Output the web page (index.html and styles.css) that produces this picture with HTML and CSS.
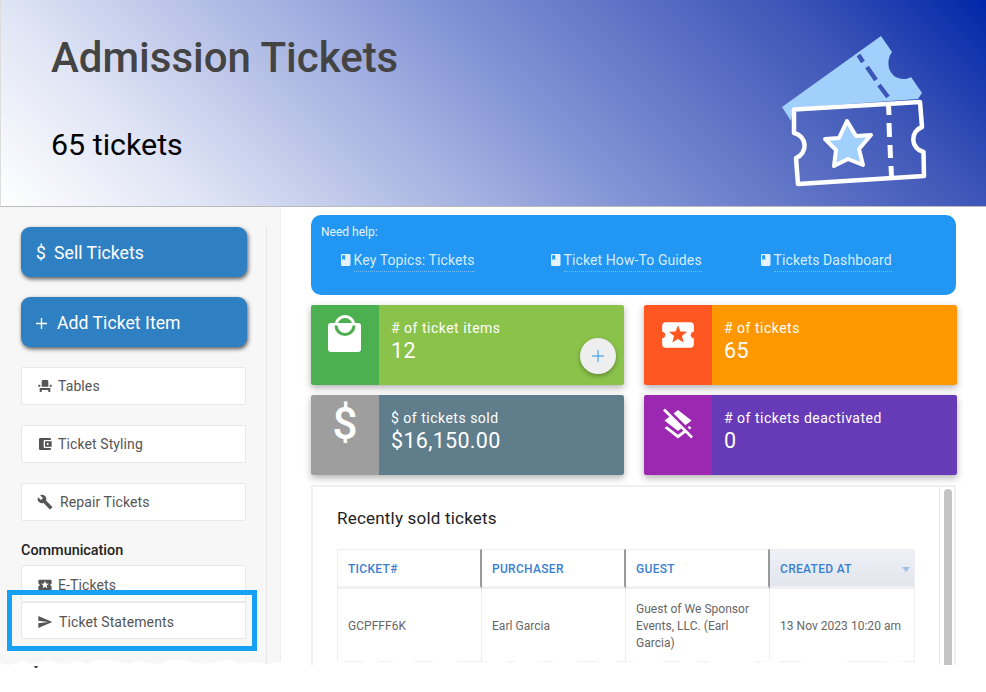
FILE: index.html
```html
<!DOCTYPE html>
<html lang="en">
<head>
<meta charset="utf-8">
<title>Admission Tickets</title>
<link rel="stylesheet" href="styles.css">
</head>
<body>
<div class="page">
  <header class="hero">
    <div class="hero-text">
      <h1 class="hero-title">Admission Tickets</h1>
      <p class="hero-count">65 tickets</p>
    </div>
    <svg class="hero-art" width="150" height="160" viewBox="780 30 150 160" aria-hidden="true">
      <path class="art-back" d="M782 107 L881 36 L892 52 C885 62 889 75 898 78 C903 80 908 79 911 77 L922 93 L918 99 L793 108 L791 121 Z"/>
      <path class="art-cut" d="M858.5 55 L863 62 M867 67 L876 80 M879 85 L888 97"/>
      <path class="art-front" d="M794 109.5 L920 102 L922 127 A13 13 0 0 0 923.5 152 L924 176 L798 184 L796 158 A13 13 0 0 0 794 133 Z"/>
      <path class="art-perf" d="M888.5 105 L889 115 M889 123 L889.5 137 M890 145 L890.5 158 M891 166 L891.5 177"/>
      <path class="art-star" d="M847 121 L856 136 L871 135 L859 149 L863 165 L848 159 L834 166 L836 150 L825 139 L839 138 Z"/>
    </svg>
  </header>
  <div class="body">
    <aside class="side">
      <div class="side-inner">
        <a class="cta"><span class="cta-glyph">$</span>Sell Tickets</a>
        <a class="cta"><svg class="cta-plus" width="11" height="11" viewBox="0 0 11 11"><path d="M5.5 0V11M0 5.5H11"/></svg>Add Ticket Item</a>
        <a class="item"><svg class="item-ico" viewBox="0 0 24 24"><path d="M4 18v3h3v-3h10v3h3v-6H4zm15-8h3v3h-3zM2 10h3v3H2zm15 3H7V5c0-1.1.9-2 2-2h6c1.1 0 2 .9 2 2v8z"/></svg>Tables</a>
        <a class="item"><svg class="item-ico" viewBox="0 0 24 24"><path d="M21 18v1c0 1.1-.9 2-2 2H5c-1.11 0-2-.9-2-2V5c0-1.1.89-2 2-2h14c1.1 0 2 .9 2 2v1h-9c-1.11 0-2 .9-2 2v8c0 1.1.89 2 2 2h9zm-9-2h10V8H12v8zm4-2.5c-.83 0-1.5-.67-1.5-1.5s.67-1.5 1.5-1.5 1.5.67 1.5 1.5-.67 1.5-1.5 1.5z"/></svg>Ticket Styling</a>
        <a class="item item-wide"><svg class="item-ico" viewBox="0 0 24 24"><path d="M22.7 19l-9.1-9.1c.9-2.3.4-5-1.5-6.9-2-2-5-2.4-7.4-1.3L9 6 6 9 1.6 4.7C.4 7.1.9 10.1 2.9 12.1c1.9 1.9 4.6 2.4 6.9 1.5l9.1 9.1c.4.4 1 .4 1.4 0l2.3-2.3c.5-.4.5-1.1.1-1.4z"/></svg>Repair Tickets</a>
        <h3 class="side-heading">Communication</h3>
        <div class="item-group">
          <a class="item"><svg class="item-ico" viewBox="0 0 24 24"><path d="M20 12c0-1.1.9-2 2-2V6c0-1.1-.9-2-2-2H4c-1.1 0-1.99.9-1.99 2v4c1.1 0 1.99.9 1.99 2s-.89 2-2 2v4c0 1.1.9 2 2 2h16c1.1 0 2-.9 2-2v-4c-1.1 0-2-.9-2-2zm-4.42 4.8L12 14.5l-3.58 2.3 1.08-4.12-3.29-2.69 4.24-.25L12 5.8l1.54 3.95 4.24.25-3.29 2.69 1.09 4.11z"/></svg>E-Tickets</a>
          <a class="item item-wide"><svg class="item-ico" viewBox="0 0 24 24"><path d="M2.01 21L23 12 2.01 3 2 10l15 2-15 2z"/></svg>Ticket Statements</a>
        </div>
      </div>
    </aside>
    <main class="main">
      <section class="help">
        <div class="help-title">Need help:</div>
        <div class="help-links">
          <div class="help-cell"><svg class="book" viewBox="4 2 16 20"><path d="M18 2H6c-1.1 0-2 .9-2 2v16c0 1.1.9 2 2 2h12c1.1 0 2-.9 2-2V4c0-1.1-.9-2-2-2zM6 4h5v8l-2.5-1.5L6 12V4z"/></svg><a class="help-link">Key Topics: Tickets</a></div>
          <div class="help-cell"><svg class="book" viewBox="4 2 16 20"><path d="M18 2H6c-1.1 0-2 .9-2 2v16c0 1.1.9 2 2 2h12c1.1 0 2-.9 2-2V4c0-1.1-.9-2-2-2zM6 4h5v8l-2.5-1.5L6 12V4z"/></svg><a class="help-link">Ticket How-To Guides</a></div>
          <div class="help-cell"><svg class="book" viewBox="4 2 16 20"><path d="M18 2H6c-1.1 0-2 .9-2 2v16c0 1.1.9 2 2 2h12c1.1 0 2-.9 2-2V4c0-1.1-.9-2-2-2zM6 4h5v8l-2.5-1.5L6 12V4z"/></svg><a class="help-link">Tickets Dashboard</a></div>
        </div>
      </section>
      <section class="cards">
        <div class="card card-green">
          <div class="card-icon">
            <svg class="bag" width="36" height="40" viewBox="0 0 36 40">
              <circle class="bag-ring" cx="18" cy="11.5" r="9"/>
              <rect class="bag-body" x="1" y="9" width="33" height="29" rx="3"/>
              <path class="bag-arc" d="M9 11.5 A9 9 0 0 0 27 11.5"/>
            </svg>
          </div>
          <div class="card-body">
            <div class="card-label"># of ticket items</div>
            <div class="card-value">12</div>
            <a class="fab"><svg width="12" height="12" viewBox="0 0 12 12"><path d="M6 0V12M0 6H12"/></svg></a>
          </div>
        </div>
        <div class="card card-orange">
          <div class="card-icon">
            <svg class="card-svg" viewBox="0 0 24 24"><path d="M20 12c0-1.1.9-2 2-2V6c0-1.1-.9-2-2-2H4c-1.1 0-1.99.9-1.99 2v4c1.1 0 1.99.9 1.99 2s-.89 2-2 2v4c0 1.1.9 2 2 2h16c1.1 0 2-.9 2-2v-4c-1.1 0-2-.9-2-2zm-4.42 4.8L12 14.5l-3.58 2.3 1.08-4.12-3.29-2.69 4.24-.25L12 5.8l1.54 3.95 4.24.25-3.29 2.69 1.09 4.11z"/></svg>
          </div>
          <div class="card-body">
            <div class="card-label"># of tickets</div>
            <div class="card-value">65</div>
          </div>
        </div>
        <div class="card card-slate">
          <div class="card-icon"><span class="dollar">$</span></div>
          <div class="card-body">
            <div class="card-label">$ of tickets sold</div>
            <div class="card-value">$16,150.00</div>
          </div>
        </div>
        <div class="card card-purple">
          <div class="card-icon">
            <svg class="card-svg" viewBox="0 0 24 24"><path d="M19.81 14.99l1.19-.92-1.43-1.43-1.19.92 1.43 1.43zm-.45-4.72L21 9l-9-7-2.91 2.27 7.87 7.88 2.4-1.88zM3.27 1L2 2.27l4.22 4.22L3 9l1.63 1.27L12 16l2.1-1.63 1.43 1.43L12 18.54l-7.37-5.73L3 14.07l9 7 4.95-3.85L20.73 21 22 19.73 3.27 1z"/></svg>
          </div>
          <div class="card-body">
            <div class="card-label"># of tickets deactivated</div>
            <div class="card-value">0</div>
          </div>
        </div>
      </section>
      <section class="panel">
        <div class="panel-content">
          <h2 class="panel-title">Recently sold tickets</h2>
          <table class="grid">
            <thead>
              <tr>
                <th>TICKET#</th>
                <th>PURCHASER</th>
                <th>GUEST</th>
                <th class="sorted">CREATED AT<span class="caret"></span></th>
              </tr>
            </thead>
            <tbody>
              <tr>
                <td>GCPFFF6K</td>
                <td>Earl Garcia</td>
                <td>Guest of We Sponsor Events, LLC. (Earl Garcia)</td>
                <td>13 Nov 2023 10:20 am</td>
              </tr>
            </tbody>
          </table>
        </div>
        <div class="scroll"><div class="scroll-thumb"></div></div>
      </section>
    </main>
  </div>
  <div class="highlight"></div>
  <svg class="tear" width="986" height="34" viewBox="0 658 986 34" aria-hidden="true">
    <path class="tear-fill" d="M0 663 L8 665 L15 664 L22 661 L30 664 L40 663 L48 660 L56 663 L66 664 L78 661 L88 664 L96 660 L106 659 L118 662 L128 664 L138 661 L146 663 L160 664 L172 659 L182 660 L194 663 L206 664 L218 662 L230 660 L240 664 L252 662 L266 664 L280 662 L296 664 L304 665 L314 665 L322 662 L344 661 L352 663 L372 660 L382 662 L398 661 L412 661 L420 663 L446 660 L462 662 L476 663 L494 660 L512 662 L526 660 L548 662 L566 660 L590 663 L604 660 L622 662 L640 661 L656 660 L672 663 L684 660 L704 662 L722 660 L744 660 L760 662 L772 660 L788 663 L812 660 L842 661 L866 663 L890 661 L914 662 L926 665 L986 665 L986 692 L0 692 Z"/>
    <path class="tear-fleck" d="M34 666 L38 666 L37 668 L35 668 Z"/>
  </svg>
</div>
</body>
</html>
```
FILE: styles.css
```css
* { box-sizing: border-box; }
html, body { margin: 0; padding: 0; background: #fff; }
body { font-family: Roboto, "Liberation Sans", sans-serif; color: #444; }

.page { position: relative; width: 986px; height: 692px; overflow: hidden; }

/* Header */
.hero {
  height: 207px;
  display: flex;
  justify-content: space-between;
  align-items: flex-start;
  padding: 33px 56px 0 50px;
  border-left: 1px solid #ddd;
  border-bottom: 1px solid #bbb;
  background: linear-gradient(45deg, #fff 0%, #e0e5f5 17%, #8596d6 52%, #3d55b7 83%, #0026a8 100%);
}
.hero-title { margin: 0; font-size: 42px; line-height: 49px; font-weight: 500; color: #444; }
.hero-count { margin: 45px 0 0; font-size: 30.4px; line-height: 36px; color: #000; }
.hero-art { display: block; margin-top: -3px; }
.art-back { fill: #a1d0fc; }
.art-cut { fill: none; stroke: #3c56b8; stroke-width: 4.5; }
.art-front { fill: none; stroke: #fff; stroke-width: 4.5; stroke-linejoin: round; }
.art-perf { fill: none; stroke: #fff; stroke-width: 5; }
.art-star { fill: #a1d0fc; stroke: #fff; stroke-width: 4; stroke-linejoin: round; }

/* Layout */
.body { display: flex; height: 459px; overflow: hidden; }

/* Sidebar */
.side {
  flex: 0 0 281px;
  min-width: 0;
  padding: 20px 13px 0 1px;
  background: #f7f7f7;
  border-right: 1px solid #eee;
}
.side-inner {
  height: 100%;
  padding-left: 20px;
  padding-right: 19px;
  border-right: 1px solid #e6e6e6;
}
.cta {
  display: flex;
  align-items: center;
  width: 226px;
  height: 50px;
  margin-bottom: 20px;
  padding: 2px 0 0 15px;
  border-radius: 9px;
  background: #2f80c2;
  color: #fff;
  font-size: 17.6px;
  letter-spacing: .05px;
  box-shadow: 1px 2px 4px rgba(0,0,0,.65);
}
.cta-glyph { width: 18px; font-size: 17.6px; }
.cta-plus { margin-right: 10px; }
.cta-plus path { fill: none; stroke: #fff; stroke-width: 1.4; }
.item {
  display: flex;
  align-items: center;
  width: 225px;
  height: 38px;
  margin-bottom: 20px;
  padding-left: 15px;
  background: #fff;
  border: 1px solid #e8e8e8;
  border-radius: 2px;
  color: #555;
  font-size: 14px;
  letter-spacing: .1px;
}
.item-ico { width: 16px; height: 16px; margin-right: 5px; fill: #555; flex: none; }
.item-wide .item-ico { margin-right: 7px; }
.side-heading { margin: 21px 0 6px; font-size: 14.4px; line-height: 17px; font-weight: 500; color: #222; }
.item-group .item { margin-bottom: 0; height: 37px; padding-top: 2px; }
.item-group .item-wide .item-ico { margin-right: 6px; }

/* Main */
.main { flex: 1; min-width: 0; padding: 8px 30px 0; }

.help {
  height: 80px;
  padding: 10px 10px 0;
  background: #2196f3;
  border-radius: 10px;
}
.help-title { font-size: 12px; line-height: 15px; color: #eaf5fe; }
.help-links { display: grid; grid-template-columns: repeat(3, 210px); margin-top: 12px; padding-left: 20px; }
.help-cell { display: flex; align-items: flex-start; height: 22px; }
.book { width: 9.5px; height: 12px; margin: 2px 3px 0 0; fill: #e3f2fd; flex: none; }
.help-link {
  display: block;
  padding-bottom: 3px;
  font-size: 14px;
  line-height: 16px;
  letter-spacing: .1px;
  color: #d6ecfd;
  border-bottom: 1px dotted #74bcf6;
}

/* Cards */
.cards { display: grid; grid-template-columns: 313px 313px; gap: 10px 20px; margin-top: 10px; }
.card { display: flex; height: 80px; border-radius: 2px; overflow: hidden; box-shadow: 0 3px 7px rgba(0,0,0,.3); color: #fff; }
.card-icon { flex: 0 0 68px; display: flex; justify-content: center; align-items: flex-start; }
.card-body { position: relative; flex: 1; padding: 14px 12px 0; }
.card-label { font-size: 14px; line-height: 19px; letter-spacing: .5px; }
.card-value { font-size: 21.5px; line-height: 26px; letter-spacing: .3px; }
.card-green .card-icon { background: #4caf50; }
.card-green .card-body { background: #8bc34a; }
.card-orange .card-icon { background: #ff5722; }
.card-orange .card-body { background: #ff9800; }
.card-slate .card-icon { background: #9e9e9e; }
.card-slate .card-body { background: #607d8b; }
.card-purple .card-icon { background: #9c27b0; }
.card-purple .card-body { background: #673ab7; }
.card-svg { width: 36px; height: 36px; margin-top: 12px; fill: #fff; }
.card-orange .card-svg { width: 38px; height: 38px; margin-top: 11px; }
.bag { margin-top: 9px; }
.bag-ring { fill: none; stroke: #fff; stroke-width: 3; }
.bag-body { fill: #fff; }
.bag-arc { fill: none; stroke: #4caf50; stroke-width: 3; }
.dollar { font-size: 44px; line-height: 52px; font-weight: 500; margin-top: 3px; }
.fab {
  position: absolute;
  right: 8px;
  top: 33px;
  display: flex;
  justify-content: center;
  align-items: center;
  width: 36px;
  height: 36px;
  border-radius: 50%;
  background: #eee;
  box-shadow: 0 2px 5px rgba(0,0,0,.3);
}
.fab path { fill: none; stroke: #2196f3; stroke-width: 1; }

/* Panel */
.panel {
  display: flex;
  width: 645px;
  height: 190px;
  margin-top: 10px;
  border: 2px solid #f0f0f0;
  border-bottom: 0;
}
.panel-content { flex: 1; min-width: 0; padding: 0 25px 0 24px; border-right: 1px solid #e8e8e8; }
.panel-title { margin: 18px 0; font-size: 17px; line-height: 26px; font-weight: 400; color: #222; letter-spacing: .2px; }
.scroll { flex: 0 0 14px; padding: 2px 2px 0 4px; }
.scroll-thumb { width: 8px; height: 200px; border-radius: 4px 4px 0 0; background: #c4c4c4; }

.grid { width: 578px; border-collapse: separate; border-spacing: 0; table-layout: fixed; }
.grid th {
  width: 144px;
  height: 40px;
  padding: 2px 0 0 10px;
  text-align: left;
  font-size: 12px;
  font-weight: 500;
  color: #3a80d2;
  letter-spacing: .3px;
  border-top: 1px solid #eee;
  border-right: 2px solid #999;
  border-bottom: 3px solid #f0f0f0;
  background: #fff;
}
.grid th:first-child { width: 145px; border-left: 1px solid #eee; }
.grid th:last-child { width: 145px; border-right: 1px solid #eee; }
.grid th.sorted { position: relative; background: linear-gradient(#eff1f7, #e1e5ed); }
.caret {
  position: absolute;
  right: 4px;
  top: 17px;
  width: 0;
  height: 0;
  border-left: 4px solid transparent;
  border-right: 4px solid transparent;
  border-top: 5px solid #9dbfe8;
}
.grid td {
  height: 73px;
  padding: 2px 5px 0 10px;
  font-size: 12px;
  line-height: 17px;
  letter-spacing: .03px;
  color: #666;
  border-right: 1px solid #eee;
  border-bottom: 1px solid #eee;
}
.grid td:first-child { border-left: 1px solid #eee; }

/* Overlays */
.highlight {
  position: absolute;
  left: 7px;
  top: 590px;
  width: 250px;
  height: 61px;
  border: 5px solid #16a0f6;
}
.tear { position: absolute; left: 0; top: 658px; display: block; }
.tear-fill { fill: #fff; }
.tear-fleck { fill: #444; }
```
